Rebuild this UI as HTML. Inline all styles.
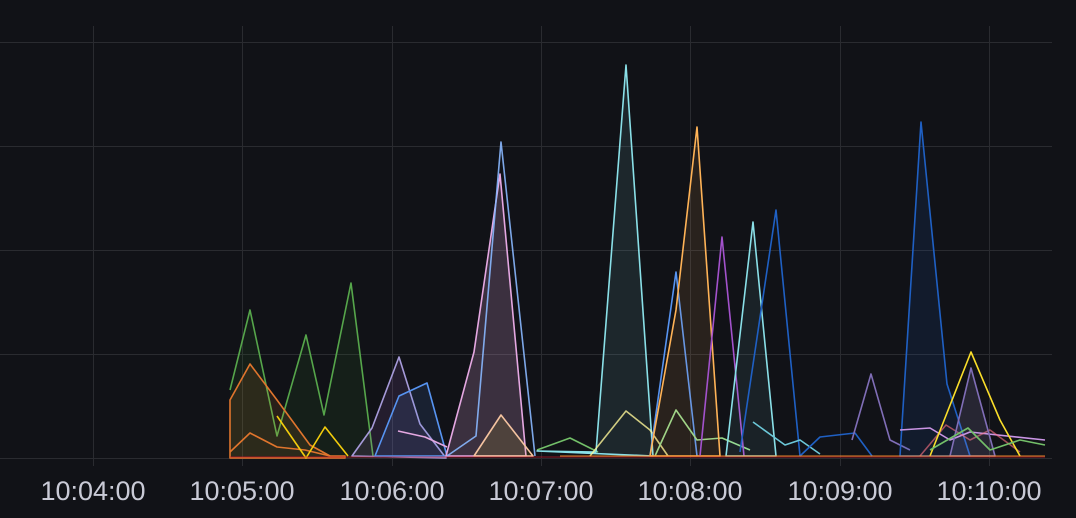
<!DOCTYPE html><html><head><style>body{margin:0;background:#111217;width:1076px;height:518px;overflow:hidden}svg{display:block}text{font-family:"Liberation Sans",sans-serif;font-size:27px;fill:#c9cad6}</style></head><body>
<svg width="1076" height="518" viewBox="0 0 1076 518">
<g stroke="#2a2b30" stroke-width="1">
<line x1="0" y1="42.5" x2="1052" y2="42.5"/><line x1="0" y1="146.5" x2="1052" y2="146.5"/><line x1="0" y1="250.5" x2="1052" y2="250.5"/><line x1="0" y1="354.5" x2="1052" y2="354.5"/><line x1="0" y1="458.5" x2="1052" y2="458.5"/>
<line x1="93.5" y1="26" x2="93.5" y2="466"/><line x1="242.5" y1="26" x2="242.5" y2="466"/><line x1="392.5" y1="26" x2="392.5" y2="466"/><line x1="541.5" y1="26" x2="541.5" y2="466"/><line x1="690.5" y1="26" x2="690.5" y2="466"/><line x1="840.5" y1="26" x2="840.5" y2="466"/><line x1="989.5" y1="26" x2="989.5" y2="466"/>
</g>
<g stroke-width="1.6" stroke-linejoin="round">
<path d="M230 390 L250 310 L277 436 L306 335 L324 415 L351 283 L373 456 L373 458 L230 458Z" fill="#37872d" fill-opacity=".12" stroke="none"/>
<path d="M230 390 L250 310 L277 436 L306 335 L324 415 L351 283 L373 456" fill="none" stroke="#56a64b"/>
<path d="M230 400 L250 364 L277 400 L310 445 L330 456 L345 456 L345 458 L230 458Z" fill="#ff9830" fill-opacity=".1" stroke="#e0752d"/>
<path d="M230 452 L250 433 L277 447 L305 450 L330 456" fill="none" stroke="#e0752d"/>
<path d="M277 416 L306 458 L325 427 L348 456" fill="none" stroke="#f2cc0c"/>
<path d="M352 456 L372 428 L399 357 L420 424 L446 458 Z" fill="#b877d9" fill-opacity=".12" stroke="#a69ad9"/>
<path d="M375 456 L399 396 L427 383 L447 456 Z" fill="#5794f2" fill-opacity=".12" stroke="#5794f2"/>
<path d="M398 431 L425 437 L447 447" fill="none" stroke="#e5a8e2"/>
<path d="M446 456 L474 352 L500 174 L526 456 Z" fill="#e5a8e2" fill-opacity=".2" stroke="#e5a8e2"/>
<path d="M447 456 L476 436 L501 142 L535 456" fill="none" stroke="#8ab8ff" stroke-opacity=".9"/>
<path d="M474 456 L501 415 L533 456 Z" fill="#fade2a" fill-opacity=".1" stroke="#f4c3a0"/>
<path d="M537 450 L570 438 L598 452" fill="none" stroke="#73bf69"/>
<path d="M537 451 L596 452 L626 65 L653 456 Z" fill="#8ae0e8" fill-opacity=".1" stroke="#8ae0e8"/>
<path d="M590 456 L626 411 L650 430 L668 456" fill="none" stroke="#fff899" stroke-opacity=".8"/>
<path d="M650 456 L676 272 L697 456" fill="none" stroke="#5794f2"/>
<path d="M655 456 L676 410 L697 440 L722 438 L750 450" fill="none" stroke="#96d98d"/>
<path d="M650 456 L676 310 L697 127 L720 456 Z" fill="#ffb357" fill-opacity=".1" stroke="#ffb357"/>
<path d="M700 456 L722 237 L744 456" fill="none" stroke="#a352cc"/>
<path d="M726 456 L753 222 L776 456 Z" fill="#8ae0e8" fill-opacity=".08" stroke="#8ae0e8"/>
<path d="M740 452 L776 210 L800 456" fill="none" stroke="#1f60c4"/>
<path d="M753 422 L785 445 L800 440 L820 454" fill="none" stroke="#6cc8d8"/>
<path d="M800 456 L820 437 L855 433 L872 456" fill="none" stroke="#1f60c4"/>
<path d="M852 440 L871 374 L890 440 L910 450" fill="none" stroke="#806eb7"/>
<path d="M900 456 L921 122 L947 384 L970 456 Z" fill="#1f60c4" fill-opacity=".12" stroke="#1f60c4"/>
<path d="M900 430 L930 428 L950 440 L970 432 L1045 440" fill="none" stroke="#ca95e5"/>
<path d="M920 456 L946 425 L970 440 L990 430 L1020 452" fill="none" stroke="#ff7383" stroke-opacity=".6"/>
<path d="M930 456 L971 352 L1000 420 L1020 456" fill="none" stroke="#fade2a"/>
<path d="M950 456 L971 368 L995 456 Z" fill="#a69ad9" fill-opacity=".15" stroke="#806eb7"/>
<path d="M930 450 L968 428 L990 450 L1020 440 L1045 445" fill="none" stroke="#73bf69"/>
<path d="M230 457 L1045 457" stroke="#c4162a" stroke-width="1" stroke-opacity=".7"/>
<path d="M560 456 L1045 456" stroke="#ff9830" stroke-width="1.2" stroke-opacity=".7"/>
</g>
<text x="93" y="500" text-anchor="middle">10:04:00</text>
<text x="242" y="500" text-anchor="middle">10:05:00</text>
<text x="392" y="500" text-anchor="middle">10:06:00</text>
<text x="541" y="500" text-anchor="middle">10:07:00</text>
<text x="690" y="500" text-anchor="middle">10:08:00</text>
<text x="840" y="500" text-anchor="middle">10:09:00</text>
<text x="989" y="500" text-anchor="middle">10:10:00</text>
</svg></body></html>
